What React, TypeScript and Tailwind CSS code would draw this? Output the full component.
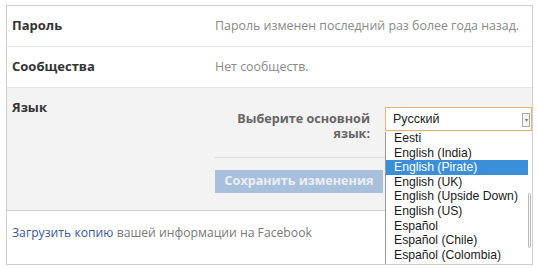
const languages = [
  'Eesti',
  'English (India)',
  'English (Pirate)',
  'English (UK)',
  'English (Upside Down)',
  'English (US)',
  'Español',
  'Español (Chile)',
  'Español (Colombia)',
]

function Row({ label, value }: { label: string; value: string }) {
  return (
    <div className="flex h-[41px] items-center border-b border-[#e6e6e6]">
      <div className="w-[208px] pl-[5px] text-[13px] font-bold text-[#333]">{label}</div>
      <div className="text-[12.4px] text-[#8a8a8a]">{value}</div>
    </div>
  )
}

export default function App() {
  return (
    <div className="h-[268px] w-[538px] overflow-hidden bg-white pl-[6px] pt-[5px] font-['Open_Sans',sans-serif]">
      <div className="relative h-[260px] w-[527px] overflow-hidden border border-[#cfcfcf]">
        <Row label="Пароль" value="Пароль изменен последний раз более года назад." />
        <Row label="Сообщества" value="Нет сообществ." />

        {/* язык */}
        <div className="flex h-[123px] border-b border-[#cfcfcf] bg-[#f3f3f3]">
          <div className="w-[208px] pl-[5px] pt-[10px] text-[13px] font-bold text-[#333]">Язык</div>
          <div className="flex flex-1 flex-col pt-[19px]">
            <div className="flex items-start">
              <div className="mt-[4px] w-[155px] text-right text-[12.6px] leading-[15px] font-bold text-[#666]">
                Выберите основной
                <br />
                язык:
              </div>
              <div className="relative ml-[15px] flex h-[24px] flex-1 items-center border border-[#e2b774] bg-white pl-[7px] font-['Liberation_Sans',sans-serif] text-[12.5px] text-[#222]">
                Русский
                <div className="absolute right-[1px] top-[5px] flex h-[14px] w-[8px] items-center justify-center border border-[#aaa] bg-[#f4f4f4] text-[6px] text-[#777]">
                  ▾
                </div>
              </div>
            </div>
            <div className="mt-[16px] h-px w-full bg-[#dcdcdc]" />
            <div className="mt-[12px] flex h-[23px] w-[168px] items-center justify-center bg-[#a9c0dc] text-[12.6px] font-bold text-[#e9eff7]">
              Сохранить изменения
            </div>
          </div>
        </div>

        <div className="pl-[5px] pt-[13px] text-[12.2px] text-[#7a7a7a]">
          <span className="text-[#3b5998]">Загрузить копию</span> вашей информации на Facebook
        </div>

        {/* выпадающий список */}
        <div className="absolute left-[378px] top-[126px] flex h-[140px] w-[147px] border-l border-[#9a9a9a] bg-white font-['Liberation_Sans',sans-serif] text-[12.2px] text-[#1a1a1a]">
          <div className="flex flex-1 flex-col">
            <div className="-mt-[1px]">
              {languages.map((l) => (
                <div
                  key={l}
                  className={
                    l === 'English (Pirate)'
                      ? 'h-[14.6px] bg-[#3b8fd9] pl-[8px] leading-[14.6px] text-white'
                      : 'h-[14.6px] pl-[8px] leading-[14.6px]'
                  }
                >
                  {l}
                </div>
              ))}
            </div>
          </div>
          <div className="w-[4px] pt-[61px]">
            <div className="h-[55px] w-[3px] rounded-sm border border-[#b5b5b5]" />
          </div>
        </div>
      </div>
    </div>
  )
}
